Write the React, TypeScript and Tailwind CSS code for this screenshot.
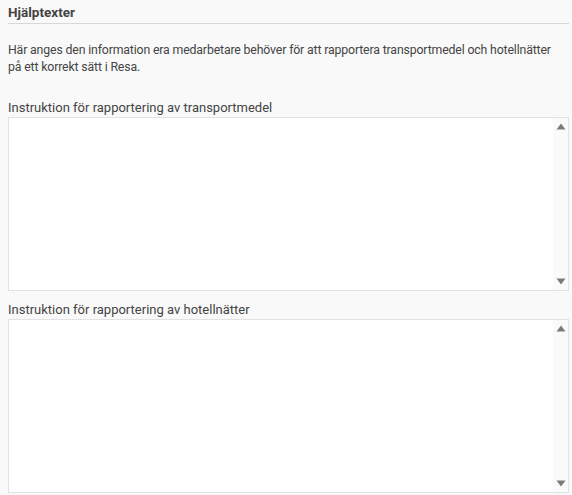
import React from 'react';

function ScrollArea() {
  return (
    <div className="flex h-[174px] mt-[1px] bg-white border border-[#e2e2e2]">
      <textarea className="flex-1 h-full bg-white resize-none outline-none" />
      <div className="w-[15px] h-full bg-[#fafafa] flex flex-col justify-between items-center py-[5px]">
        <svg width="10" height="7" viewBox="0 0 10 7">
          <path d="M5 0.5 L9.5 6.5 L0.5 6.5 Z" fill="#7a7a7a" />
        </svg>
        <svg width="10" height="7" viewBox="0 0 10 7">
          <path d="M0.5 0.5 L9.5 0.5 L5 6.5 Z" fill="#7a7a7a" />
        </svg>
      </div>
    </div>
  );
}

export default function App() {
  return (
    <div className="min-h-[495px] bg-[#f9f9f9] pl-2 pr-[3px] pt-[4px] text-[#444] font-['Roboto',sans-serif]">
      <h2 className="text-[13.5px] font-bold leading-[16px] pb-[3px] border-b border-[#d8d8d8]">Hjälptexter</h2>

      <p className="mt-[18px] text-[12.3px] tracking-[-0.15px] leading-[17px]">
        <span className="whitespace-nowrap">
          Här anges den information era medarbetare behöver för att rapportera transportmedel och hotellnätter
        </span>
        <br />
        på ett korrekt sätt i Resa.
      </p>

      <label className="block mt-[24px] text-[13px] leading-[16px]">
        Instruktion för rapportering av transportmedel
      </label>
      <ScrollArea />

      <label className="block mt-[11px] text-[13px] leading-[16px]">
        Instruktion för rapportering av hotellnätter
      </label>
      <ScrollArea />
    </div>
  );
}
